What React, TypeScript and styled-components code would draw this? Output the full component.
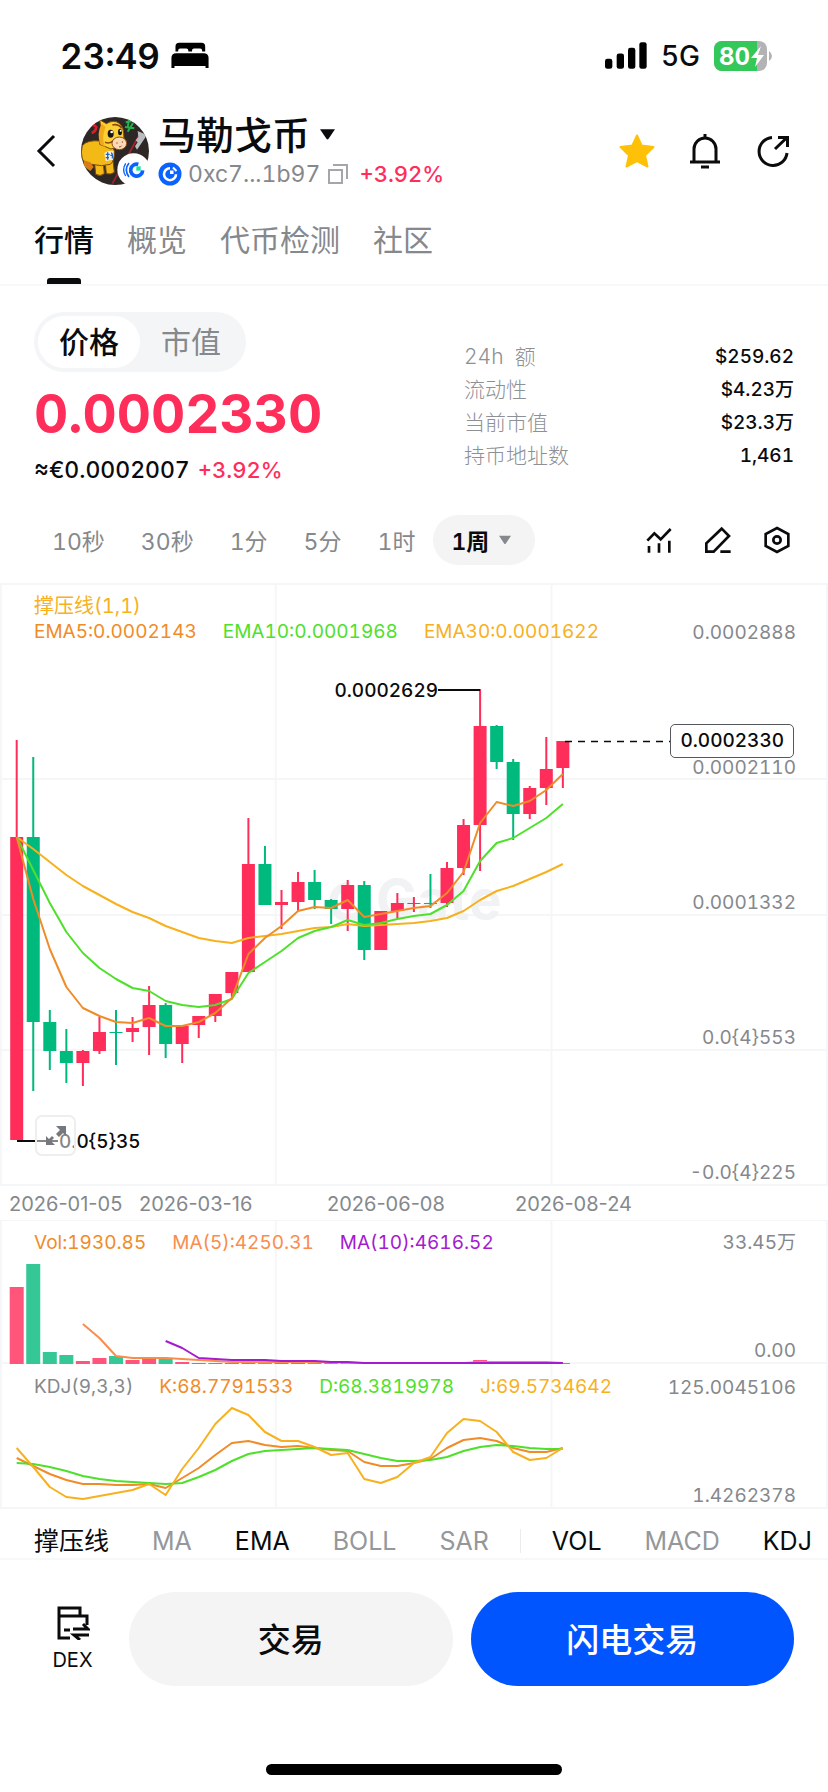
import React, { useState } from "react";
import styled, { createGlobalStyle } from "styled-components";

const RED = "#ff2d5a";
const GREEN = "#00b97c";
const ORANGE = "#f08c28";
const AMBER = "#f7b11e";
const LIME = "#4fe02c";
const PURPLE = "#a41bd0";
const GRID = "#f5f6f7";

const GlobalStyle = createGlobalStyle`
  * {
    box-sizing: border-box;
  }
  body {
    margin: 0;
    background: #fff;
    color: #0a0b0d;
    font-family: Inter, "Noto Sans CJK SC", sans-serif;
    font-variant-numeric: tabular-nums;
  }
  button {
    border: 0;
    padding: 0;
    background: none;
    color: inherit;
    font: inherit;
    cursor: pointer;
  }
  svg {
    display: block;
    flex: none;
  }
`;

const Page = styled.div`
  display: flex;
  flex-direction: column;
  min-height: 100vh;
`;

const StatusBar = styled.div`
  display: flex;
  align-items: center;
  justify-content: space-between;
  height: 111px;
  padding: 0 56px 0 60px;
`;

const StatusGroup = styled.div<{ $gap: number }>`
  display: flex;
  align-items: center;
  gap: ${({ $gap }) => $gap}px;
`;

const Clock = styled.span`
  font-size: 35px;
  font-weight: 600;
`;

const Network = styled.span`
  font-size: 28px;
  font-weight: 500;
`;

const Header = styled.header`
  display: flex;
  align-items: center;
  height: 80px;
  padding: 0 37px 0 34px;
`;

const BackButton = styled.button`
  width: 46px;
  padding-left: 2px;
`;

const TokenInfo = styled.div`
  display: flex;
  flex: 1;
  flex-direction: column;
  padding: 3px 0 0 8px;
`;

const TokenName = styled.button`
  display: flex;
  align-items: center;
  gap: 10px;
  height: 42px;
  font-size: 38px;
  font-weight: 500;
  line-height: 42px;
`;

const TokenMeta = styled.div`
  display: flex;
  align-items: center;
  height: 36px;
  font-size: 23px;
  line-height: 36px;
`;

const Address = styled.span`
  padding: 0 8px 0 6px;
  color: #85888c;
`;

const Change = styled.span`
  color: ${RED};
  font-size: 22px;
  font-weight: 500;
`;

const HeaderChange = styled(Change)`
  padding-left: 11px;
`;

const HeaderActions = styled.div`
  display: flex;
  gap: 32px;
`;

const TabBar = styled.nav`
  display: flex;
  gap: 33px;
  height: 95px;
  padding: 0 34px;
  border-bottom: 2px solid #f7f8f9;
`;

const Tab = styled.button<{ $active?: boolean }>`
  display: flex;
  flex-direction: column;
  align-items: center;
  justify-content: space-between;
  padding-top: 31px;
  color: ${({ $active }) => ($active ? "#0a0b0d" : "#85888c")};
  font-size: 30px;
  font-weight: ${({ $active }) => ($active ? 500 : 400)};
  line-height: 36px;
  &::after {
    content: "";
    width: 34px;
    height: 6px;
    border-radius: 3px 3px 0 0;
    background: ${({ $active }) => ($active ? "#0a0b0d" : "transparent")};
  }
`;

const Summary = styled.section`
  display: grid;
  grid-template-columns: 430fr 330fr;
  padding: 26px 34px 0;
`;

const Segment = styled.div`
  display: inline-flex;
  height: 60px;
  padding: 4px;
  border-radius: 30px;
  background: #f3f5f7;
`;

const SegmentItem = styled.button<{ $active?: boolean }>`
  width: 102px;
  border-radius: 26px;
  background: ${({ $active }) => ($active ? "#fff" : "transparent")};
  color: ${({ $active }) => ($active ? "#0a0b0d" : "#85888c")};
  font-size: 30px;
  font-weight: ${({ $active }) => ($active ? 500 : 400)};
  line-height: 50px;
`;

const Price = styled.div`
  margin-top: 12px;
  color: ${RED};
  font-size: 53px;
  font-weight: 700;
  line-height: 60px;
`;

const PriceSub = styled.div`
  display: flex;
  gap: 8px;
  margin-top: 12px;
  font-size: 23px;
  font-weight: 500;
  line-height: 28px;
`;

const Stats = styled.dl`
  margin: 28px 0 0;
`;

const StatRow = styled.div`
  display: flex;
  justify-content: space-between;
  line-height: 33px;
  dt {
    color: #8d9094;
    font-size: 21px;
    font-weight: 300;
    white-space: pre;
  }
  dd {
    margin: 0;
    font-size: 19px;
    font-weight: 500;
  }
`;

const IntervalBar = styled.div`
  display: flex;
  align-items: center;
  justify-content: space-between;
  height: 50px;
  margin: 31px 0 18px;
  padding: 0 37px 0 34px;
`;

const Intervals = styled.div`
  display: flex;
`;

const Interval = styled.button<{ $active?: boolean }>`
  display: flex;
  align-items: center;
  gap: 10px;
  height: 50px;
  padding: 0 ${({ $active }) => ($active ? 24 : 18)}px 0 18px;
  border-radius: 25px;
  background: ${({ $active }) => ($active ? "#f4f4f5" : "transparent")};
  color: ${({ $active }) => ($active ? "#0a0b0d" : "#85888c")};
  font-size: 23px;
  font-weight: ${({ $active }) => ($active ? 600 : 400)};
`;

const Tools = styled.div`
  display: flex;
  gap: 31px;
`;

/* every layer of a pane shares the same grid cell */
const Pane = styled.section<{ $height: number }>`
  position: relative;
  display: grid;
  grid-template: ${({ $height }) => $height}px / 100%;
  > * {
    grid-area: 1 / 1;
  }
`;

const Legends = styled.div<{ $top: number }>`
  padding: ${({ $top }) => $top}px 34px 0;
`;

const LegendRow = styled.div`
  display: flex;
  gap: 26px;
  font-size: 19px;
  line-height: 26px;
  white-space: nowrap;
`;

const LegendTitle = styled(LegendRow)`
  color: ${AMBER};
  font-size: 20px;
`;

const LegendItem = styled.span<{ $color: string }>`
  color: ${({ $color }) => $color};
`;

const Axis = styled.div<{ $top: number }>`
  display: flex;
  flex-direction: column;
  justify-content: space-between;
  padding: ${({ $top }) => $top}px 32px 0 0;
  color: #85888c;
  font-size: 19px;
  line-height: 26px;
  text-align: right;
`;

const PriceTag = styled.span`
  position: absolute;
  top: 141px;
  right: 34px;
  height: 34px;
  padding: 0 9px;
  border: 1px solid #55585c;
  border-radius: 5px;
  background: #fff;
  font-size: 19px;
  font-weight: 500;
  line-height: 32px;
`;

const ExpandButton = styled.button`
  position: absolute;
  top: 532px;
  left: 35px;
  display: grid;
  place-items: center;
  width: 41px;
  height: 41px;
  border: 2px solid #eeeeef;
  border-radius: 7px;
  background: rgba(255, 255, 255, 0.5);
`;

const Dates = styled.div`
  display: grid;
  grid-template-columns: 130fr 188fr 188fr 313fr;
  height: 34px;
  padding-left: 9px;
  color: #85888c;
  font-size: 20px;
  font-variant-numeric: normal;
  line-height: 36px;
`;

const Indicators = styled.nav`
  display: flex;
  align-items: center;
  gap: 43px;
  height: 51px;
  padding: 15px 0 0 34px;
  overflow: hidden;
  border-bottom: 2px solid #f7f8f9;
`;

const Indicator = styled.button<{ $active?: boolean }>`
  flex: none;
  color: ${({ $active }) => ($active ? "#0a0b0d" : "#94979b")};
  font-size: 25px;
  line-height: 32px;
`;

const Divider = styled.i`
  flex: none;
  width: 1px;
  height: 24px;
  margin: 0 -12px;
  background: #ececee;
`;

const Footer = styled.footer`
  display: flex;
  gap: 18px;
  padding: 32px 34px 0;
`;

const DexButton = styled.button`
  display: flex;
  flex-direction: column;
  align-items: center;
  gap: 6px;
  width: 77px;
  padding-top: 12px;
  font-size: 20px;
  line-height: 28px;
`;

const TradeButton = styled.button<{ $primary?: boolean }>`
  flex: 1;
  height: 94px;
  padding-bottom: 3px;
  border-radius: 47px;
  background: ${({ $primary }) => ($primary ? "#0055ff" : "#f4f4f4")};
  color: ${({ $primary }) => ($primary ? "#fff" : "#0a0b0d")};
  font-size: 33px;
  font-weight: 500;
`;

const HomeIndicator = styled.div`
  width: 296px;
  height: 11px;
  margin: 78px auto 17px;
  border-radius: 6px;
  background: #000;
`;

// [up, high, body top, body bottom, low]
type Candle = [boolean, number, number, number, number];
const candles: Candle[] = [
  [true, 740, 837, 1140, 1140],
  [false, 757, 837, 1022, 1091],
  [false, 1010, 1022, 1051, 1070],
  [false, 1029, 1051, 1063, 1083],
  [true, 1050, 1051, 1063, 1086],
  [true, 1017, 1032, 1051, 1054],
  [false, 1010, 1032, 1033, 1065],
  [true, 1017, 1028, 1032, 1042],
  [true, 986, 1005, 1027, 1055],
  [false, 1003, 1005, 1044, 1058],
  [true, 1026, 1026, 1044, 1063],
  [true, 1016, 1016, 1025, 1038],
  [true, 994, 994, 1016, 1022],
  [true, 972, 972, 993, 997],
  [true, 818, 864, 972, 972],
  [false, 846, 864, 905, 905],
  [true, 890, 902, 905, 929],
  [true, 872, 882, 902, 911],
  [false, 870, 882, 900, 909],
  [false, 899, 900, 909, 924],
  [true, 880, 885, 909, 931],
  [false, 881, 885, 950, 960],
  [true, 911, 911, 950, 950],
  [true, 893, 903, 911, 918],
  [true, 897, 903, 904, 912],
  [false, 874, 903, 904, 908],
  [true, 862, 868, 903, 907],
  [true, 819, 825, 868, 875],
  [true, 689, 726, 825, 871],
  [false, 725, 726, 762, 769],
  [false, 759, 762, 814, 840],
  [true, 786, 788, 814, 819],
  [true, 737, 769, 788, 805],
  [true, 741, 741, 768, 788],
];

const ema5 = [
  837, 899, 949, 987, 1008, 1016, 1022, 1023, 1018, 1026, 1026, 1022, 1013, 998, 954, 938, 926, 911,
  907, 908, 900, 917, 914, 911, 908, 906, 893, 872, 823, 802, 806, 801, 790, 774,
];
const ema10 = [
  837, 870, 903, 932, 953, 968, 979, 988, 991, 1001, 1005, 1007, 1005, 999, 973, 962, 951, 938, 931,
  927, 920, 925, 923, 919, 916, 914, 905, 891, 861, 843, 838, 828, 818, 804,
];
const ema30 = [
  837, 849, 862, 875, 886, 895, 904, 912, 918, 926, 932, 938, 941, 943, 938, 936, 934, 931, 928, 927,
  924, 926, 925, 924, 923, 921, 918, 911, 900, 891, 886, 879, 872, 864,
];

const volumes = [
  1287, 1264, 1352, 1355, 1361, 1358, 1356, 1360, 1359, 1359, 1362, 1363, 1363, 1363, 1362, 1362,
  1362, 1362, 1362, 1363, 1363, 1363, 1363, 1363, 1363, 1363, 1363, 1363, 1360, 1363, 1363, 1363,
  1363, 1363,
];
const volMa5 = [
  1324, 1338, 1356, 1358, 1358, 1358, 1359, 1360, 1361, 1362, 1362, 1362, 1362, 1362, 1362, 1362,
  1363, 1363, 1363, 1363, 1363, 1363, 1363, 1363, 1362, 1362, 1362, 1362, 1362, 1363,
];
const volMa10 = [
  1341, 1348, 1358, 1359, 1360, 1360, 1360, 1361, 1361, 1361, 1362, 1362, 1363, 1363, 1363, 1363,
  1363, 1363, 1363, 1363, 1363, 1363, 1363, 1363, 1363,
];

const kdjK = [
  1458, 1466, 1474, 1480, 1484, 1484, 1485, 1485, 1484, 1488, 1478, 1468, 1455, 1443, 1441, 1445,
  1447, 1446, 1448, 1450, 1451, 1462, 1466, 1466, 1463, 1459, 1448, 1440, 1438, 1441, 1448, 1452,
  1452, 1448,
];
const kdjD = [
  1463, 1464, 1467, 1471, 1476, 1479, 1481, 1482, 1483, 1484, 1483, 1477, 1470, 1461, 1454, 1451,
  1450, 1449, 1448, 1449, 1450, 1454, 1458, 1461, 1461, 1460, 1457, 1451, 1447, 1445, 1446, 1448,
  1449, 1449,
];
const kdjJ = [
  1448, 1467, 1487, 1497, 1499, 1496, 1493, 1490, 1484, 1495, 1469, 1448, 1424, 1408, 1415, 1432,
  1441, 1441, 1447, 1455, 1453, 1479, 1483, 1477, 1463, 1457, 1433, 1419, 1421, 1432, 1452, 1460,
  1458, 1448,
];

const STEP = 16.55;
const xAt = (i: number) => 16.7 + i * STEP;

const Line = ({ data, color, from = 0 }: { data: number[]; color: string; from?: number }) => (
  <polyline
    points={data.map((y, i) => `${xAt(i + from)},${y}`).join(" ")}
    fill="none"
    stroke={color}
    strokeWidth="2"
    strokeLinejoin="round"
  />
);

const GridLines = ({ rows }: { rows: number[] }) => (
  <g stroke={GRID} strokeWidth="2">
    {["0.1%", "33.3%", "66.6%", "99.9%"].map((x) => (
      <line key={x} x1={x} x2={x} y1="0" y2="100%" />
    ))}
    {rows.map((y) => (
      <line key={y} x1="0" x2="100%" y1={y} y2={y} />
    ))}
  </g>
);

const PriceChart = () => (
  <svg width="100%" height="603" role="img" aria-label="K线">
    <GridLines rows={[1, 196, 332, 467, 602]} />
    <path d="M350 303a16 16 0 1 0 15 16" fill="none" stroke="#f1f2f4" strokeWidth="8" />
    <text x="376" y="336" fontSize="55" fontWeight="700" fill="#f1f2f4">
      Gate
    </text>
    <g transform="translate(0 -583)">
      {candles.map(([up, high, top, bottom, low], i) => (
        <g key={i} fill={up ? RED : GREEN}>
          <rect x={xAt(i) - 1} y={high} width="2" height={low - high} />
          <rect x={xAt(i) - 6.5} y={top} width="13" height={bottom - top} />
        </g>
      ))}
      <Line data={ema30} color={AMBER} />
      <Line data={ema10} color={LIME} />
      <Line data={ema5} color={ORANGE} />
      <path d="M438 690H480M17 1141H58" stroke="#0a0b0d" strokeWidth="2" />
      <path d="M565 741.500H674" stroke="#0a0b0d" strokeWidth="1.500" strokeDasharray="7 6" />
      <g fontSize="19" fontWeight="500" fill="#0a0b0d">
        <text x="438" y="697" textAnchor="end">
          0.0002629
        </text>
        <text x="59" y="1148">
          0.0{"{5}"}35
        </text>
      </g>
    </g>
  </svg>
);

const VolumeChart = () => (
  <svg width="100%" height="144" role="img" aria-label="成交量">
    <GridLines rows={[0, 143]} />
    <g transform="translate(0 -1220)">
      {volumes.map((y, i) => (
        <rect
          key={i}
          x={xAt(i) - 7}
          y={y}
          width="14"
          height={1364 - y}
          fill={candles[i][0] ? "#ff557b" : "#36c796"}
        />
      ))}
      <Line data={volMa5} color="#f98d4c" from={4} />
      <Line data={volMa10} color={PURPLE} from={9} />
    </g>
  </svg>
);

const KdjChart = () => (
  <svg width="100%" height="145" role="img" aria-label="KDJ">
    <GridLines rows={[144]} />
    <g transform="translate(0 -1364)">
      <Line data={kdjK} color={ORANGE} />
      <Line data={kdjD} color={LIME} />
      <Line data={kdjJ} color={AMBER} />
    </g>
  </svg>
);

const BedIcon = () => (
  <svg width="38" height="27" viewBox="512 127 112 80">
    <path d="M525 155v-15q0-11 11-11h66q11 0 11 11v15h-9v-3q0-6-6-6h-18q-6 0-6 6v3h-11v-3q0-6-6-6h-18q-6 0-6 6v3z" />
    <path d="M513 204v-30q0-14 14-14h82q14 0 14 14v30h-9v-6h-92v6z" />
  </svg>
);

const SignalIcon = () => (
  <svg width="42" height="27" viewBox="574 125 126 80">
    <rect x="574" y="175" width="22" height="30" rx="7" />
    <rect x="609" y="159" width="22" height="46" rx="7" />
    <rect x="643" y="142" width="22" height="63" rx="7" />
    <rect x="677" y="125" width="22" height="80" rx="7" />
  </svg>
);

const BatteryIcon = () => (
  <svg width="58" height="30" viewBox="0 0 58 30">
    <clipPath id="battery">
      <rect width="53" height="30" rx="8" />
    </clipPath>
    <g clipPath="url(#battery)">
      <rect width="53" height="30" fill="#b3b3b6" />
      <rect width="43" height="30" fill="#34c759" />
    </g>
    <path d="M55 10q3 2 3 5t-3 5z" fill="#b3b3b6" />
    <text x="5" y="24" fontSize="24" fontWeight="700" fill="#fff">
      80
    </text>
    <path d="M47 5 37 17h6l-2 9 9-12h-6z" fill="#fff" />
  </svg>
);

const Avatar = () => (
  <svg width="70" height="70" viewBox="31 33 210 210" role="img" aria-label="马勒戈币">
    <clipPath id="avatar">
      <circle cx="136" cy="138" r="102" />
    </clipPath>
    <g clipPath="url(#avatar)">
      <rect x="31" y="33" width="210" height="210" fill="#2d2825" />
      <path d="M58 62q14-6 22 4-2 14-14 18" fill="none" stroke="#d8202c" strokeWidth="8" />
      <path d="M168 52l20-4M178 40l-4 30M166 66l28 4M190 54l-16 26" stroke="#22b14c" strokeWidth="6" />
      <path d="M212 84 128 236" stroke="#a8232b" strokeWidth="5" />
      <path d="M204 78l28 12-30 44-6-10 8-12-6-6 8-10z" fill="#b9bcc0" />
      <g fill="#f3b916" stroke="#7a4a10" strokeWidth="3">
        <path d="M74 166h26l4 40q-12 10-26 2z" />
        <path d="M106 166h24l4 36q-10 8-24 4z" />
        <path d="M38 122q14-18 54-14 36 2 42 30 2 28-12 40-26 8-56 0-22-4-28-16-6-20 0-40z" />
      </g>
      <path d="M42 166l20 6 10 14-10 12-20-14z" fill="#d77d18" />
      <path d="M94 72l-4-28 20 12q24-14 40 0 12 10 12 30l2 34-40 12-34-14z" fill="#fbd033" stroke="#7a4a10" strokeWidth="3" />
      <path d="M96 56q-16 30-4 62l14 8q-12-30 2-60z" fill="#f0a91a" />
      <path d="M106 112q16 6 26-6M128 60q18-4 28 10" fill="none" stroke="#8a4a16" strokeWidth="5" />
      <ellipse cx="149" cy="115" rx="22" ry="19" fill="#fbd9b5" stroke="#8a4a16" strokeWidth="3" />
      <ellipse cx="123" cy="86" rx="9" ry="12" fill="#1b1412" />
      <ellipse cx="151" cy="81" rx="6" ry="10" fill="#1b1412" />
      <circle cx="126" cy="81" r="4" fill="#fff" />
      <circle cx="153" cy="77" r="3" fill="#fff" />
      <path d="M142 112v4M158 109v4M148 126q6 0 8-4" stroke="#8a4a16" strokeWidth="3" fill="none" />
      <path d="M104 144q14-8 28-6l-2 26-22 4z" fill="#f4f0e0" />
      <path d="M108 148h12M114 142v22M108 158h10M124 144q6 0 4 16M122 151h8" stroke="#1d66c9" strokeWidth="4" fill="none" />
    </g>
    <circle cx="192" cy="194" r="49" fill="#fff" />
    <g fill="none" stroke="#0a62ff">
      <path d="M206 178a18 18 0 1 0 13 18" strokeWidth="11" />
      <path d="M178 174q-16 20 0 42" strokeWidth="5" />
      <path d="M168 175q-12 19 0 38" strokeWidth="4" />
    </g>
    <rect x="200" y="184" width="13" height="13" fill="#17e5a0" />
  </svg>
);

const ChainIcon = () => (
  <svg width="24" height="24" viewBox="0 0 24 24">
    <circle cx="12" cy="12" r="11.500" fill="#0a62ff" />
    <path d="M12 6.200a6 6 0 1 0 6 6" fill="none" stroke="#fff" strokeWidth="2.600" />
    <path d="M12 8.500h3.500V12H12z" fill="#fff" />
    <path d="M15 5.500l3.500 3.500" stroke="#fff" strokeWidth="2" />
  </svg>
);

const CopyIcon = () => (
  <svg width="20" height="20" viewBox="0 0 20 20" fill="none" stroke="#a3a6aa" strokeWidth="2">
    <path d="M1 6h13v13H1zM5 1h14v14" />
  </svg>
);

const Caret = ({ size, color }: { size: number; color: string }) => (
  <svg width={size} height={size} viewBox="0 0 14 14">
    <path d="M0 2h14L8 11q-1 1.200-2 0z" fill={color} />
  </svg>
);

const tabs = ["行情", "概览", "代币检测", "社区"];
const intervals = ["10秒", "30秒", "1分", "5分", "1时", "1周"];
const stats = [
  ["24h  额", "$259.62"],
  ["流动性", "$4.23万"],
  ["当前市值", "$23.3万"],
  ["持币地址数", "1,461"],
];
const mainIndicators = ["撑压线", "MA", "EMA", "BOLL", "SAR"];
const subIndicators = ["VOL", "MACD", "KDJ"];
const enabled = ["撑压线", "EMA", "VOL", "KDJ"];

const App: React.FC = () => {
  const [tab, setTab] = useState("行情");
  const [interval, setIntervalName] = useState("1周");
  const [mode, setMode] = useState("价格");

  return (
    <Page>
      <GlobalStyle />
      <StatusBar>
        <StatusGroup $gap={11}>
          <Clock>23:49</Clock>
          <BedIcon />
        </StatusGroup>
        <StatusGroup $gap={14}>
          <SignalIcon />
          <Network>5G</Network>
          <BatteryIcon />
        </StatusGroup>
      </StatusBar>

      <Header>
        <BackButton aria-label="返回">
          <svg width="22" height="34" viewBox="0 0 22 34" fill="none" stroke="#0a0b0d" strokeWidth="3">
            <path d="M18 2 3 17l15 15" />
          </svg>
        </BackButton>
        <Avatar />
        <TokenInfo>
          <TokenName>
            马勒戈币
            <Caret size={15} color="#0a0b0d" />
          </TokenName>
          <TokenMeta>
            <ChainIcon />
            <Address>0xc7...1b97</Address>
            <CopyIcon />
            <HeaderChange>+3.92%</HeaderChange>
          </TokenMeta>
        </TokenInfo>
        <HeaderActions>
          <button aria-label="收藏">
            <svg width="36" height="36" viewBox="0 0 36 36">
              <path
                d="M18 2.500 22.600 12.500 34.500 14 26 22.300 28.500 33.500 18 28.200 7.500 33.500 10 22.300 1.500 14 13.400 12.500z"
                fill="#ffc107"
                stroke="#ffc107"
                strokeWidth="2"
                strokeLinejoin="round"
              />
            </svg>
          </button>
          <button aria-label="提醒">
            <svg width="36" height="36" viewBox="0 0 36 36" fill="none" stroke="#0a0b0d" strokeWidth="3">
              <path d="M7 29V16a11 11 0 0 1 22 0v13M3 29h30M14 34h8M18 1v4" />
            </svg>
          </button>
          <button aria-label="分享">
            <svg width="36" height="36" viewBox="0 0 36 36" fill="none" stroke="#0a0b0d" strokeWidth="3">
              <path d="M17 4.500a14 14 0 1 0 15 15.500M20 16 32 4.500M23 4.500h9.500V14" />
            </svg>
          </button>
        </HeaderActions>
      </Header>

      <TabBar>
        {tabs.map((name) => (
          <Tab key={name} $active={name === tab} onClick={() => setTab(name)}>
            {name}
          </Tab>
        ))}
      </TabBar>

      <Summary>
        <div>
          <Segment>
            {["价格", "市值"].map((name) => (
              <SegmentItem key={name} $active={name === mode} onClick={() => setMode(name)}>
                {name}
              </SegmentItem>
            ))}
          </Segment>
          <Price>0.0002330</Price>
          <PriceSub>
            <span>≈€0.0002007</span>
            <Change>+3.92%</Change>
          </PriceSub>
        </div>
        <Stats>
          {stats.map(([label, value]) => (
            <StatRow key={label}>
              <dt>{label}</dt>
              <dd>{value}</dd>
            </StatRow>
          ))}
        </Stats>
      </Summary>

      <IntervalBar>
        <Intervals>
          {intervals.map((name) => (
            <Interval key={name} $active={name === interval} onClick={() => setIntervalName(name)}>
              {name}
              {name === "1周" && <Caret size={12} color="#85888c" />}
            </Interval>
          ))}
        </Intervals>
        <Tools>
          <button aria-label="指标">
            <svg width="28" height="28" viewBox="690 708 84 84" fill="none" stroke="#0a0b0d" strokeWidth="8">
              <path d="M697 752l21-22 19 18 30-31M702 768v20M732 760v28M763 752v36" />
            </svg>
          </button>
          <button aria-label="画线">
            <svg width="28" height="28" viewBox="869 708 84 84" fill="none" stroke="#0a0b0d" strokeWidth="8">
              <path d="M876 785v-25l46-44 22 22-46 47zM918 785h31" />
            </svg>
          </button>
          <button aria-label="设置">
            <svg width="28" height="28" viewBox="1047 710 84 84" fill="none" stroke="#0a0b0d" strokeWidth="8">
              <path d="M1089 716l34 18v36l-34 18-34-18v-36z" />
              <circle cx="1089" cy="752" r="11" />
            </svg>
          </button>
        </Tools>
      </IntervalBar>

      <Pane $height={603}>
        <PriceChart />
        <Legends $top={10}>
          <LegendTitle>撑压线(1,1)</LegendTitle>
          <LegendRow>
            <LegendItem $color={ORANGE}>EMA5:0.0002143</LegendItem>
            <LegendItem $color={LIME}>EMA10:0.0001968</LegendItem>
            <LegendItem $color={AMBER}>EMA30:0.0001622</LegendItem>
          </LegendRow>
        </Legends>
        <Axis $top={37}>
          <span>0.0002888</span>
          <span>0.0002110</span>
          <span>0.0001332</span>
          <span>0.0{"{4}"}553</span>
          <span>-0.0{"{4}"}225</span>
        </Axis>
        <PriceTag>0.0002330</PriceTag>
        <ExpandButton aria-label="全屏">
          <svg width="22" height="22" viewBox="0 0 22 22" fill="#75787c">
            <path d="M11 1h10v10l-3-3-4 4-3-3 4-4zM10 20H1v-9l3 3 3-3 2 2-3 3z" />
          </svg>
        </ExpandButton>
      </Pane>

      <Dates>
        <span>2026-01-05</span>
        <span>2026-03-16</span>
        <span>2026-06-08</span>
        <span>2026-08-24</span>
      </Dates>

      <Pane $height={144}>
        <VolumeChart />
        <Legends $top={10}>
          <LegendRow>
            <LegendItem $color={ORANGE}>Vol:1930.85</LegendItem>
            <LegendItem $color="#f98d4c">MA(5):4250.31</LegendItem>
            <LegendItem $color={PURPLE}>MA(10):4616.52</LegendItem>
          </LegendRow>
        </Legends>
        <Axis $top={10}>
          <span>33.45万</span>
          <span>0.00</span>
        </Axis>
      </Pane>

      <Pane $height={145}>
        <KdjChart />
        <Legends $top={10}>
          <LegendRow>
            <LegendItem $color="#85888c">KDJ(9,3,3)</LegendItem>
            <LegendItem $color={ORANGE}>K:68.7791533</LegendItem>
            <LegendItem $color={LIME}>D:68.3819978</LegendItem>
            <LegendItem $color={AMBER}>J:69.5734642</LegendItem>
          </LegendRow>
        </Legends>
        <Axis $top={11}>
          <span>125.0045106</span>
          <span>1.4262378</span>
        </Axis>
      </Pane>

      <Indicators>
        {mainIndicators.map((name) => (
          <Indicator key={name} $active={enabled.includes(name)}>
            {name}
          </Indicator>
        ))}
        <Divider />
        {subIndicators.map((name) => (
          <Indicator key={name} $active={enabled.includes(name)}>
            {name}
          </Indicator>
        ))}
      </Indicators>

      <Footer>
        <DexButton>
          <svg width="34" height="36" viewBox="0 0 34 36" fill="none" stroke="#0a0b0d" strokeWidth="3">
            <path d="M14 34H3V4h21v8M3 12h28v9M8 26h6" />
            <path d="M17 25h15l-5-5M33 31H18l6 5" />
          </svg>
          DEX
        </DexButton>
        <TradeButton>交易</TradeButton>
        <TradeButton $primary>闪电交易</TradeButton>
      </Footer>
      <HomeIndicator />
    </Page>
  );
};

export default App;
